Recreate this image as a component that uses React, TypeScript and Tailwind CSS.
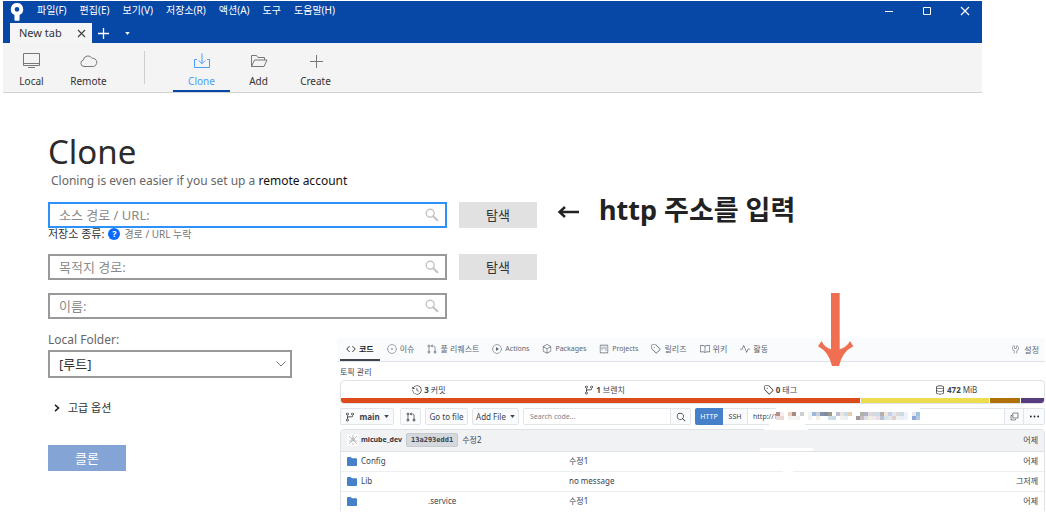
import type { ReactNode } from "react";
import {
    GoBook, GoCode, GoCopy, GoDatabase, GoGitBranch, GoGitPullRequest, GoHistory, GoIssueOpened,
    GoKebabHorizontal, GoPackage, GoPlay, GoProject, GoPulse, GoSearch, GoTag, GoTools,
} from "react-icons/go";

const menus = ["파일(F)", "편집(E)", "보기(V)", "저장소(R)", "액션(A)", "도구", "도움말(H)"];

const repoTabs = [
    { label: "코드", icon: <GoCode />, active: true },
    { label: "이슈", icon: <GoIssueOpened /> },
    { label: "풀 리퀘스트", icon: <GoGitPullRequest /> },
    { label: "Actions", icon: <GoPlay />, small: true },
    { label: "Packages", icon: <GoPackage />, small: true },
    { label: "Projects", icon: <GoProject />, small: true },
    { label: "릴리즈", icon: <GoTag /> },
    { label: "위키", icon: <GoBook /> },
    { label: "활동", icon: <GoPulse /> },
];

const stats = [
    { value: "3", label: "커밋", icon: <GoHistory /> },
    { value: "1", label: "브렌치", icon: <GoGitBranch /> },
    { value: "0", label: "태그", icon: <GoTag /> },
    { value: "472", label: "MiB", icon: <GoDatabase /> },
];

const files = [
    { name: "Config", message: "수정1", time: "어제" },
    { name: "Lib", message: "no message", time: "그저께" },
    { name: ".service", message: "수정1", time: "어제", masked: true },
];

// Masked part of the clone URL, two rows of 4px cells
const mosaic = [
    ["#b58d8b", "#f4f1ee", "#fff", "#ecd2bd", "#a58a8a", "#fff", "#c9d0ce", "#fff", "#f0f4f2", "#9db8df", "#c9cfda", "#8490ac", "#7e8ca3", "#9a9b8b", "#fff", "#b9c0cf", "#ece4dd", "#c9dce9", "#e5cfb2", "#fff", "#fff", "#a9b4a7", "#b3b0c4", "#d9dde2", "#dcd6da", "#c8dcea", "#b5adb0", "#efe6d8", "#c2d1e6", "#e4e6ee", "#dfd8d1", "#c6dcea", "#eef3f7", "#fff", "#e5e9ef", "#9cc3df"],
    ["#e7dfdd", "#ead7d1", "#fff", "#f6f2ee", "#f3f6f7", "#f5f3ef", "#fff", "#fff", "#eef3ec", "#fff", "#f3eee6", "#fff", "#fff", "#d0dfea", "#c7dce8", "#fff", "#f6f2e9", "#e8eff5", "#fff", "#fff", "#a3979c", "#c3bec4", "#dde0e8", "#f1eddf", "#eeeaee", "#e8e0e4", "#b7bfd3", "#d8e4ec", "#e2e7ef", "#dccfcb", "#f0f2ee", "#e7eef5", "#eef3f7", "#fff", "#8ea8d6", "#b4c8e6"],
];

function ToolItem({ label, active, children }: { label: string; active?: boolean; children: ReactNode }) {
    return (
        <button type="button" className={`flex w-[57px] flex-col items-center border-b-2 pt-2 text-[10px] leading-4 ${active ? "border-[#0747a6] text-[#4a9dfb]" : "border-transparent text-[#333]"}`}>
            <svg viewBox="0 0 20 20" className={`mb-0.5 h-5 w-5 shrink-0 fill-none ${active ? "stroke-[#4a9dfb]" : "stroke-[#777]"}`}>{children}</svg>
            {label}
        </button>
    );
}

function Magnifier() {
    return (
        <svg viewBox="0 0 14 14" className="h-[14px] w-[14px] shrink-0 fill-none stroke-[#c4c4c4]">
            <circle cx="5.2" cy="5.2" r="4" strokeWidth="1.4" />
            <path d="M8.2 8.2 12.4 12.2" strokeWidth="2.2" strokeLinecap="round" />
        </svg>
    );
}

function PathField({ label, focused }: { label: string; focused?: boolean }) {
    return (
        <div className={`flex h-[26px] w-[399px] items-center border-2 pr-1.5 pl-[9px] ${focused ? "border-[#2e91fa]" : "border-[#999]"}`}>
            <input aria-label={label} placeholder={label} className="min-w-0 flex-1 bg-transparent text-[13px] leading-5 outline-none placeholder:text-[#8a8a8a]" />
            <Magnifier />
        </div>
    );
}

function BrowseButton() {
    return <button type="button" className="h-[26px] w-[78px] bg-[#e1e1e1] text-[13px] leading-5 text-[#333]">탐색</button>;
}

function Caret() {
    return (
        <svg viewBox="0 0 6 4" className="h-[3px] w-[5px] fill-current"><path d="M0 0h6L3 4z" /></svg>
    );
}

function Folder() {
    return (
        <svg viewBox="0 0 10 9" className="h-[9px] w-[10px] shrink-0 fill-[#4680c8]"><path d="M0 .8Q0 0 .8 0h3l1 1.2h4.4q.8 0 .8.8v6.2q0 .8-.8.8H.8Q0 9 0 8.2z" /></svg>
    );
}

function AppHeader() {
    return (
        <header className="mr-16 ml-[3px] pt-px">
            <div className="bg-[#0747a6] text-white">
                <div className="flex h-[22px] items-start pl-1.5">
                    <svg viewBox="0 0 16 19" className="mt-0.5 mr-3 h-[18px] w-4">
                        <path fill="#fff" fillRule="evenodd" d="M8 0a6.6 6.6 0 0 1 2.7 12.6V18q0 .8-.8.8H6.1q-.8 0-.8-.8v-5.4A6.6 6.6 0 0 1 8 0zm0 4.2a2.5 2.5 0 1 0 0 5 2.5 2.5 0 0 0 0-5z" />
                    </svg>
                    <nav className="flex gap-[13px] pt-px text-[10px] leading-4">
                        {menus.map((menu) => (
                            <button type="button" key={menu}>{menu}</button>
                        ))}
                    </nav>
                    <div className="ml-auto flex h-5 items-center gap-7 pr-3">
                        <button type="button" aria-label="Minimize"><svg viewBox="0 0 10 10" className="h-[10px] w-[10px] stroke-white"><path d="M1 5.5h8" /></svg></button>
                        <button type="button" aria-label="Maximize"><svg viewBox="0 0 10 10" className="h-[10px] w-[10px] fill-none stroke-white"><path d="M1.5 1.5h7v7h-7z" /></svg></button>
                        <button type="button" aria-label="Close"><svg viewBox="0 0 10 10" className="h-[10px] w-[10px] stroke-white"><path d="m1 1 8 8M9 1 1 9" strokeWidth="1.2" /></svg></button>
                    </div>
                </div>
                <div className="flex h-5 items-center pl-[7px]">
                    <div className="flex h-5 w-[82px] items-center justify-between bg-[#f5f5f5] pr-1.5 pl-[9px] text-[11px] text-[#333]">
                        New tab
                        <button type="button" aria-label="Close tab"><svg viewBox="0 0 9 9" className="h-[9px] w-[9px] stroke-[#444]"><path d="m1 1 7 7M8 1 1 8" strokeWidth="1.2" /></svg></button>
                    </div>
                    <button type="button" aria-label="New tab" className="ml-1.5"><svg viewBox="0 0 11 11" className="h-[11px] w-[11px] stroke-white"><path d="M5.5 0v11M0 5.5h11" strokeWidth="1.3" /></svg></button>
                    <button type="button" aria-label="Tab list" className="ml-4"><Caret /></button>
                </div>
            </div>
            <div className="flex h-[50px] border-b border-[#d2d2d2] bg-[#f4f4f4]">
                <ToolItem label="Local"><path d="M1.500 2.500h16v12h-16zM1.500 12.500h16M6 16.500h7" /></ToolItem>
                <ToolItem label="Remote"><path d="M5 15.500a3.300 3.300 0 0 1-.6-6.500 4.600 4.600 0 0 1 8.600-1.700 4.100 4.100 0 0 1 1.300 8.200z" /></ToolItem>
                <div className="mr-7 ml-[27px] my-2 w-px bg-[#cfcfcf]" />
                <ToolItem label="Clone" active><path d="M5 8.500H2.500v8h15v-8H15M10 2.500v10M6.800 9.500l3.200 3.200 3.200-3.200" /></ToolItem>
                <ToolItem label="Add"><path d="M2.500 15.500v-11h5l1.500 2h6.500v2.500M2.500 15.500l3-6.500h12.500l-3 6.500z" /></ToolItem>
                <ToolItem label="Create"><path d="M10.500 4v13M4 10.500h13" /></ToolItem>
            </div>
        </header>
    );
}

function RepoPanel() {
    return (
        <section className="relative mt-[19px] mr-px min-w-0 flex-1 text-[8px] leading-3 text-[#3b4450]">
            <nav className="flex h-6 items-stretch gap-px border-b border-[#dfe3e8] bg-[#fafbfc] pl-[3px]">
                {repoTabs.map((tab) => (
                    <a href="#" key={tab.label} className={`flex items-center gap-[3px] border-b-2 px-1.5 whitespace-nowrap ${tab.small ? "text-[7px]" : "text-[8px]"} ${tab.active ? "border-[#3f454d] font-bold text-[#222]" : "border-transparent text-[#5c6570]"}`}>
                        <span className="text-[10px]">{tab.icon}</span>
                        {tab.label}
                    </a>
                ))}
                <a href="#" className="ml-auto flex items-center gap-1 pr-1.5 text-[#5c6570]"><GoTools className="text-[9px]" />설정</a>
            </nav>
            <div className="pl-[3px]">
                <p className="mt-[3px] leading-[13px]">토픽 관리</p>
                <div className="mt-0.5 overflow-hidden rounded-sm border border-[#dfe3e8]">
                    <div className="grid h-[17px] grid-cols-4">
                        {stats.map((stat) => (
                            <a href="#" key={stat.label} className="flex items-center justify-center gap-0.5">
                                <span className="text-[10px] text-[#222]">{stat.icon}</span>
                                <b>{stat.value}</b>
                                {stat.label}
                            </a>
                        ))}
                    </div>
                    <div className="flex h-[5px] gap-px">
                        <div className="grow-[521] bg-[#dd4a1c]" />
                        <div className="grow-[129] bg-[#eddc4e]" />
                        <div className="grow-[30] bg-[#b07208]" />
                        <div className="grow-[23] bg-[#573d7f]" />
                    </div>
                </div>
                <div className="relative mt-1 flex h-[17px] items-stretch">
                    <button type="button" className="flex w-[54px] items-center justify-center gap-1 rounded-xs border border-[#e1e4e8] bg-[#fafbfc]">
                        <GoGitBranch className="text-[10px] text-[#222]" /><b>main</b><Caret />
                    </button>
                    <button type="button" aria-label="Pull request" className="ml-1.5 flex w-[21px] items-center justify-center rounded-xs border border-[#e1e4e8] bg-[#fafbfc]"><GoGitPullRequest className="text-[10px] text-[#222]" /></button>
                    <button type="button" className="ml-1 w-[43px] rounded-xs border border-[#e1e4e8] bg-[#fafbfc] whitespace-nowrap">Go to file</button>
                    <button type="button" className="ml-1 flex w-[47px] items-center justify-center gap-1 rounded-xs border border-[#e1e4e8] bg-[#fafbfc] whitespace-nowrap">Add File<Caret /></button>
                    <input aria-label="Search code" placeholder="Search code..." className="ml-1 w-[148px] rounded-l-xs border border-[#e1e4e8] px-1.5 text-[7px] outline-none placeholder:text-[#7b828a]" />
                    <button type="button" aria-label="Search" className="flex w-5 items-center justify-center rounded-r-xs border border-l-0 border-[#e1e4e8] bg-[#fafbfc]"><GoSearch className="text-[10px] text-[#222]" /></button>
                    <button type="button" className="ml-1 w-7 rounded-l-xs bg-[#4680c8] text-[7px] text-white">HTTP</button>
                    <button type="button" className="w-[25px] border border-l-0 border-[#e1e4e8] bg-[#fafbfc] text-[7px]">SSH</button>
                    <div className="relative flex min-w-0 flex-1 items-center border-y border-[#e1e4e8] pl-[5px]">
                        <input aria-label="Clone URL" readOnly defaultValue="http://1" className="w-full min-w-0 text-[7px] outline-none" />
                        <svg viewBox="0 0 144 16" className="absolute -top-1 left-7 h-4 w-36" shapeRendering="crispEdges">
                            <path fill="#fff" d="M0 0h144v16H0z" />
                            {mosaic.map((row, y) => row.map((color, x) => (
                                <rect key={`${x}-${y}`} x={x * 4} y={7 + y * 4} width="4" height="4" fill={color} />
                            )))}
                        </svg>
                    </div>
                    <button type="button" aria-label="Copy" className="flex w-5 items-center justify-center border border-[#e1e4e8] bg-[#fafbfc]"><GoCopy className="text-[9px] text-[#222]" /></button>
                    <button type="button" aria-label="More" className="flex w-[21px] items-center justify-center rounded-r-xs border border-l-0 border-[#e1e4e8] bg-[#fafbfc]"><GoKebabHorizontal className="text-[11px] text-[#222]" /></button>
                </div>
                <div className="mt-1 rounded-t-sm border border-b-0 border-[#dfe3e8]">
                    <table className="w-full table-fixed">
                        <colgroup>
                            <col className="w-[228px]" />
                            <col />
                            <col className="w-[60px]" />
                        </colgroup>
                        <thead>
                            <tr className="h-[21px] border-b border-[#dfe3e8] bg-[#f1f2f4] text-left">
                                <th colSpan={2} className="p-0 pl-1.5 font-normal">
                                    <div className="flex items-center">
                                        <svg viewBox="0 0 12 12" className="mr-0.5 h-3 w-3 rounded-xs bg-white fill-none stroke-[#bcbcbc]">
                                            <path d="M2 2l8 8M10 2 2 10M6 1v4M2 7h3M7 7h3M5 10h2" /><circle cx="6" cy="5.5" r="1.5" />
                                        </svg>
                                        <b className="text-[7px] text-[#30363d]">micube_dev</b>
                                        <a href="#" className="mx-1 rounded-xs border border-[#c5cad0] bg-[#d5d9de] px-1 font-['DejaVu_Sans_Mono',monospace] text-[7px] leading-3 font-bold">13a293edd1</a>
                                        수정2
                                    </div>
                                </th>
                                <th className="p-0 pr-1.5 text-right font-normal">어제</th>
                            </tr>
                        </thead>
                        <tbody>
                            {files.map((file) => (
                                <tr key={file.name} className="h-5 border-b border-[#eceef0] last:border-b-0">
                                    <td className="p-0 pl-1.5">
                                        <div className="flex items-center gap-1">
                                            <Folder />
                                            <a href="#" className={file.masked ? "pl-[67px]" : ""}>{file.name}</a>
                                        </div>
                                    </td>
                                    <td className="p-0">{file.message}</td>
                                    <td className="p-0 pr-1.5 text-right">{file.time}</td>
                                </tr>
                            ))}
                        </tbody>
                    </table>
                </div>
            </div>
            {/* Hand-erased spots around the hidden address */}
            <svg viewBox="0 0 60 50" className="absolute top-[86px] left-[422px] h-[50px] w-[60px] fill-white">
                <path d="M10 0h36v2h3v4H5V2h5zM1 24h53v3H1zM24 45h10v3H24z" />
            </svg>
            {/* Arrow pointing at the clone URL */}
            <svg viewBox="0 0 36 74" className="absolute -top-[45px] left-[481px] h-[74px] w-9">
                <path fill="#ef6f53" d="M13 0h8.700v56.300Q29 54 32 48l3.300 5.300Q24 59 21 73h-7Q11 59 0 53.300L3.700 48Q6 54 13 56.300z" />
            </svg>
        </section>
    );
}

export default function App() {
    return (
        <div className="bg-white pb-5 font-['Noto_Sans','Noto_Sans_CJK_KR',sans-serif]">
            <AppHeader />
            <main className="pl-12">
                <h1 className="pt-[39px] text-[33px] leading-10 text-[#2b2b2b]">Clone</h1>
                <p className="h-[18px] pl-[3px] text-[12px] leading-[18px] text-[#666]">
                    Cloning is even easier if you set up a <a href="#" className="text-[#111]">remote account</a>
                </p>
                <div className="mt-3 flex items-start gap-3">
                    <PathField label="소스 경로 / URL:" focused />
                    <BrowseButton />
                    <p className="flex h-4 items-center pl-2 text-[27px] font-bold whitespace-nowrap text-[#222]">
                        <svg viewBox="0 0 22 14" className="mt-1 mr-5 h-[14px] w-[22px] fill-none stroke-[#222]"><path d="M22 7H2.500M8 2 2.500 7 8 12" strokeWidth="2.400" /></svg>
                        http 주소를 입력
                    </p>
                </div>
                <div className="flex h-3 items-center gap-1 text-[10px] leading-3 text-[#777]">
                    <span className="text-[11px] text-[#333]">저장소 종류:</span>
                    <span className="flex h-3 w-3 items-center justify-center rounded-full bg-[#0a6cff] text-[9px] font-bold text-white">?</span>
                    경로 / URL 누락
                </div>
                <div className="mt-[14px] flex gap-3">
                    <PathField label="목적지 경로:" />
                    <BrowseButton />
                </div>
                <div className="mt-[13px]">
                    <PathField label="이름:" />
                </div>
                <div className="flex items-start">
                    <div className="mr-[45px] w-[244px] shrink-0 pt-3">
                        <label htmlFor="folder" className="block text-[12px] leading-[18px] text-[#666]">Local Folder:</label>
                        <div className="relative mt-px">
                            <select id="folder" className="h-7 w-full appearance-none border-2 border-[#999] bg-white pl-[9px] text-[13px] leading-5 text-[#333]">
                                <option>[루트]</option>
                            </select>
                            <svg viewBox="0 0 10 6" className="pointer-events-none absolute top-[11px] right-1.5 h-1.5 w-[10px] fill-none stroke-[#777]"><path d="m.5.5 4.500 4.500L9.500.5" /></svg>
                        </div>
                        <button type="button" className="mt-[21px] flex h-[18px] items-center gap-2 pl-1.5 text-[11px] leading-[18px] text-[#333]">
                            <svg viewBox="0 0 6 8" className="h-2 w-1.5 fill-none stroke-[#222]"><path d="m1 .8 3.500 3.200L1 7.200" strokeWidth="1.600" /></svg>
                            고급 옵션
                        </button>
                        <button type="button" className="mt-7 block h-[26px] w-[78px] bg-[#84a4d6] text-[13px] leading-5 text-white">클론</button>
                    </div>
                    <RepoPanel />
                </div>
            </main>
        </div>
    );
}
